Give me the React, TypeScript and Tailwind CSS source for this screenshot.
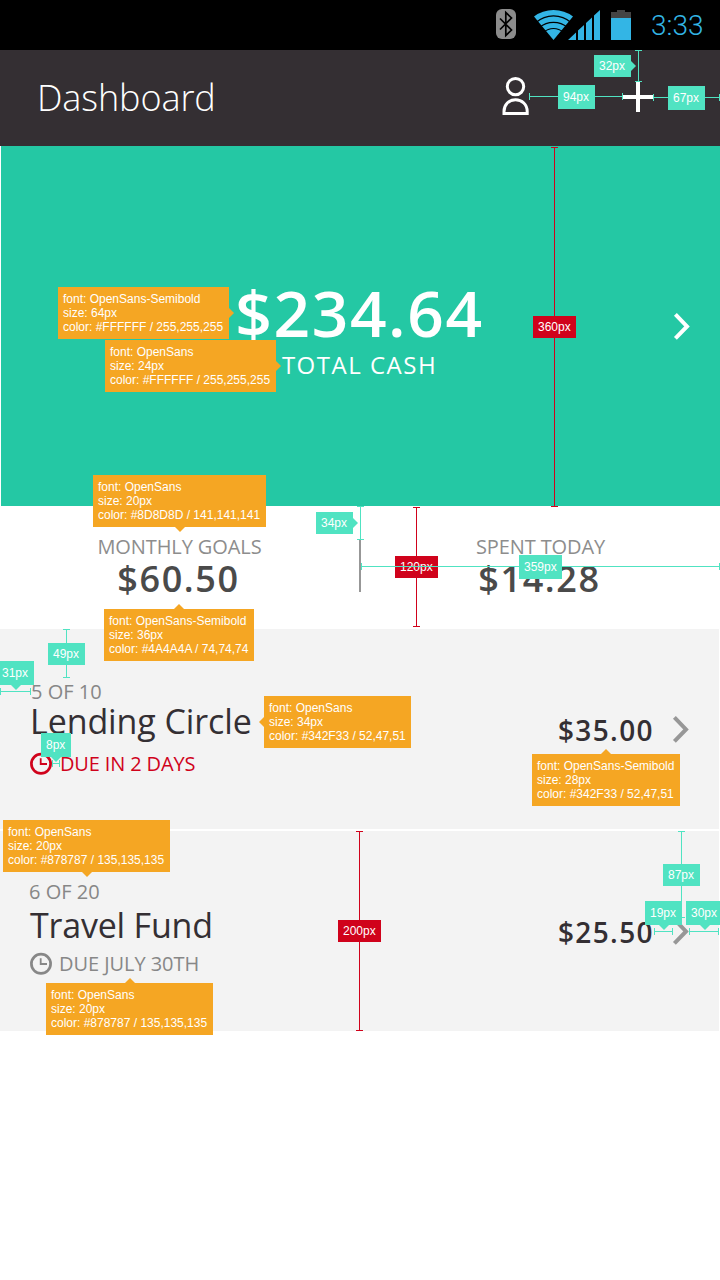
import React from "react";

type Tone = "mint" | "red";
type Side = "left" | "right" | "up" | "down";

const fills: Record<Tone, string> = {
  mint: "bg-[#50e3c2]",
  red: "bg-[#d0021b]",
};

function Arrow({ side, at, color }: { side: Side; at: number; color: string }) {
  const points = {
    left: "5,0 0,5 5,10",
    right: "0,0 5,5 0,10",
    up: "0,5 5,0 10,5",
    down: "0,0 5,5 10,0",
  }[side];
  const flat = side === "up" || side === "down";
  const place = {
    left: "right-full",
    right: "left-full",
    up: "bottom-full",
    down: "top-full",
  }[side];
  return (
    <svg
      className={`absolute ${place}`}
      width={flat ? 10 : 5}
      height={flat ? 5 : 10}
      style={flat ? { left: at - 5 } : { top: at - 5 }}
    >
      <polygon points={points} fill={color} />
    </svg>
  );
}

function Line({ x, y, length, vertical, tone = "mint" }: { x: number; y: number; length: number; vertical?: boolean; tone?: Tone }) {
  return (
    <div
      className={`absolute flex items-center justify-between ${vertical ? "w-[7px] flex-col" : "h-[7px]"}`}
      style={vertical ? { left: x - 3, top: y, height: length } : { left: x, top: y - 3, width: length }}
    >
      <span className={`${fills[tone]} ${vertical ? "h-px w-[7px]" : "h-[7px] w-px"}`} />
      <span className={`grow ${fills[tone]} ${vertical ? "w-px" : "h-px"}`} />
      <span className={`${fills[tone]} ${vertical ? "h-px w-[7px]" : "h-[7px] w-px"}`} />
    </div>
  );
}

function Tag({ x, y, w = 37, h = 22, tone = "mint", side, at = 0, children }: { x: number; y: number; w?: number; h?: number; tone?: Tone; side?: Side; at?: number; children: string }) {
  return (
    <div
      className={`absolute flex items-center whitespace-nowrap pl-[5px] text-[12px] leading-[14px] text-white ${fills[tone]}`}
      style={{ left: x, top: y, width: w, height: h }}
    >
      {children}
      {side && <Arrow side={side} at={at} color="#50e3c2" />}
    </div>
  );
}

function FontNote({ x, y, w, side, at, lines }: { x: number; y: number; w: number; side: Side; at: number; lines: string[] }) {
  return (
    <div
      className="absolute whitespace-nowrap bg-[#f5a623] p-[5px] text-[12px] leading-[14px] text-white"
      style={{ left: x, top: y, width: w }}
    >
      {lines.map((line) => (
        <div key={line}>{line}</div>
      ))}
      <Arrow side={side} at={at} color="#f5a623" />
    </div>
  );
}

function Chevron({ className }: { className: string }) {
  return (
    <svg className={className} width="18" height="28" viewBox="0 0 18 28" fill="none" stroke="currentColor" strokeWidth="4">
      <path d="M2.4 2.4 L14 14.4 L2.4 26.4" />
    </svg>
  );
}

function Clock() {
  return (
    <svg width="24" height="24" viewBox="0 0 24 24" fill="none" stroke="currentColor">
      <circle cx="12" cy="11.8" r="9.6" strokeWidth="2.7" />
      <path d="M11.7 6.3 V12 H18" strokeWidth="1.8" />
    </svg>
  );
}

function StatusBar() {
  return (
    <div className="flex h-[50px] items-center bg-black pl-[496px]">
      <svg width="136" height="50" viewBox="496 0 136 50">
        <rect x="496" y="9" width="20" height="30" rx="6" fill="#8c8c8c" />
        <path d="M500 18.5 L511.5 30 L505.8 35.5 V12.5 L511.5 18 L500 29.5" fill="none" stroke="#000" strokeWidth="1.7" />
        <path d="M553.5 40 L534 16.5 Q542.5 10 553.5 10 T573 16.5 Z" fill="#33b5e5" />
        <g fill="none" stroke="#000" strokeWidth="1.2">
          <path d="M536 22.5 Q543.5 15.8 553.5 15.8 T571 22.5" />
          <path d="M539.5 27.5 Q545.5 22.3 553.5 22.3 T567.5 27.5" />
          <path d="M543.5 32.2 Q548 28.5 553.5 28.5 T563.5 32.2" />
        </g>
        <path d="M568 40 L576 32.5 V40 Z M578 40 V30.6 L584 25 V40 Z M586 40 V23.1 L592 17.5 V40 Z M594 40 V15.6 L600 10 V40 Z" fill="#33b5e5" />
        <path d="M611 12 H617 V10 H625 V12 H631 V18 H611 Z" fill="#444" />
        <rect x="611" y="18" width="20" height="22" fill="#33b5e5" />
      </svg>
      <span className="ml-[19px] pt-0.5 font-[Roboto] text-[28px] font-light leading-[48px] text-[#33b5e5]">3:33</span>
    </div>
  );
}

function Header() {
  return (
    <header className="flex h-24 items-center justify-between bg-[#342f33] pl-[37px] pr-[67px]">
      <h1 className="text-[36px] font-light leading-[48px] tracking-[-0.1px] text-white">Dashboard</h1>
      <div className="flex items-center pb-1">
        <svg className="mr-[93px]" width="28" height="40" viewBox="502 76 28 40" fill="none" stroke="#fff" strokeWidth="3">
          <circle cx="515.5" cy="86.6" r="8.2" />
          <path d="M504 113.4 V111.5 C504 104.5 509 99.8 515.5 99.8 S527.2 104.5 527.2 111.5 V113.4 Z" />
        </svg>
        <svg className="mt-0.5" width="30" height="30" viewBox="0 0 30 30" stroke="#fff" strokeWidth="4">
          <path d="M15 0 V30 M0 15 H30" />
        </svg>
      </div>
    </header>
  );
}

function Stat({ label, amount }: { label: string; amount: string }) {
  return (
    <div className="flex w-[359px] flex-col items-center pt-[29px]">
      <span className="text-[20px] leading-6 tracking-[-0.1px] text-[#8d8d8d]">{label}</span>
      <span className="mr-0.5 text-[36px] font-semibold leading-10 tracking-[1.6px] text-[#4a4a4a]">{amount}</span>
    </div>
  );
}

export default function App() {
  return (
    <div className="relative h-[1280px] w-[720px] overflow-hidden bg-white font-['Open_Sans',sans-serif]">
      <StatusBar />
      <Header />

      <section className="ml-px flex h-[360px] items-center bg-[#24c8a4]">
        <div className="flex h-full grow flex-col items-center pl-[45px] pt-[131px] text-white">
          <span className="text-[64px] font-semibold leading-[72px] tracking-[1.6px]">$234.64</span>
          <span className="text-[24px] leading-8 tracking-[1.5px]">TOTAL CASH</span>
        </div>
        <Chevron className="mr-[29px] text-white" />
      </section>

      <section className="flex h-[123px]">
        <Stat label="MONTHLY GOALS" amount="$60.50" />
        <div className="mt-[34px] h-[52px] w-0.5 bg-[#979797]" />
        <Stat label="SPENT TODAY" amount="$14.28" />
      </section>

      <main className="mr-px flex flex-col gap-0.5">
        <article className="flex h-[200px] items-center justify-between bg-[#f3f3f3] pr-[29px]">
          <div className="flex flex-col self-start pt-[51px]">
            <span className="pl-[31px] text-[20px] leading-6 text-[#878787]">5 OF 10</span>
            <span className="-mt-px pl-[30px] text-[34px] leading-9 tracking-[-0.1px] text-[#342f33]">Lending Circle</span>
            <div className="mt-[13px] flex items-center pl-[29px] text-[#d0021b]">
              <Clock />
              <span className="ml-[7px] text-[20px] leading-6 tracking-[-0.15px]">DUE IN 2 DAYS</span>
            </div>
          </div>
          <div className="flex items-center gap-[18px]">
            <span className="pt-px text-[28px] font-semibold leading-9 tracking-[1.4px] text-[#342f33]">$35.00</span>
            <Chevron className="text-[#979797]" />
          </div>
        </article>
        <article className="flex h-[200px] items-center justify-between bg-[#f3f3f3] pr-[29px]">
          <div className="flex flex-col self-start pt-[49px]">
            <span className="pl-[29px] text-[20px] leading-6 text-[#878787]">6 OF 20</span>
            <span className="mt-[3px] pl-[30px] text-[34px] leading-9 tracking-[-0.2px] text-[#342f33]">Travel Fund</span>
            <div className="mt-[9px] flex items-center pl-[29px] text-[#878787]">
              <Clock />
              <span className="ml-1.5 text-[20px] leading-6 tracking-[-0.05px]">DUE JULY 30TH</span>
            </div>
          </div>
          <div className="flex items-center gap-[18px]">
            <span className="pt-px text-[28px] font-semibold leading-9 tracking-[1.4px] text-[#342f33]">$25.50</span>
            <Chevron className="text-[#979797]" />
          </div>
        </article>
      </main>

      <div className="absolute inset-0 font-['Liberation_Sans',sans-serif]">
        <Line x={638} y={50} length={32} vertical />
        <Tag x={594} y={55} side="right" at={11}>32px</Tag>
        <Line x={529} y={96} length={94} />
        <Tag x={558} y={85} h={24}>94px</Tag>
        <Line x={653} y={97} length={67} />
        <Tag x={668} y={86} h={24}>67px</Tag>

        <Line x={554} y={147} length={360} vertical tone="red" />
        <Tag x={533} y={316} w={43} tone="red">360px</Tag>
        <Line x={416} y={507} length={120} vertical tone="red" />
        <Tag x={395} y={556} w={43} tone="red">120px</Tag>
        <Line x={360} y={506} length={34} vertical />
        <Tag x={316} y={512} side="right" at={11}>34px</Tag>
        <Line x={361} y={566} length={359} />
        <Tag x={519} y={555} w={43} h={24}>359px</Tag>

        <Line x={66} y={629} length={49} vertical />
        <Tag x={48} y={643}>49px</Tag>
        <Line x={0} y={691} length={31} />
        <Tag x={-3} y={661} h={24} side="down" at={19}>31px</Tag>
        <Line x={52} y={763} length={8} />
        <Tag x={41} y={733} w={30} h={24} side="down" at={15}>8px</Tag>

        <Line x={359} y={831} length={200} vertical tone="red" />
        <Tag x={338} y={920} w={43} tone="red">200px</Tag>
        <Line x={681} y={831} length={87} vertical />
        <Tag x={663} y={864}>87px</Tag>
        <Line x={654} y={931} length={19} />
        <Tag x={645} y={901} h={24} side="down" at={19}>19px</Tag>
        <Line x={689} y={931} length={30} />
        <Tag x={686} y={901} h={24} side="down" at={19}>30px</Tag>

        <FontNote x={58} y={287} w={171} side="right" at={26} lines={["font: OpenSans-Semibold", "size: 64px", "color: #FFFFFF / 255,255,255"]} />
        <FontNote x={105} y={340} w={171} side="right" at={26} lines={["font: OpenSans", "size: 24px", "color: #FFFFFF / 255,255,255"]} />
        <FontNote x={93} y={475} w={173} side="down" at={87} lines={["font: OpenSans", "size: 20px", "color: #8D8D8D / 141,141,141"]} />
        <FontNote x={104} y={609} w={150} side="up" at={75} lines={["font: OpenSans-Semibold", "size: 36px", "color: #4A4A4A / 74,74,74"]} />
        <FontNote x={264} y={696} w={147} side="left" at={26} lines={["font: OpenSans", "size: 34px", "color: #342F33 / 52,47,51"]} />
        <FontNote x={532} y={754} w={148} side="up" at={74} lines={["font: OpenSans-Semibold", "size: 28px", "color: #342F33 / 52,47,51"]} />
        <FontNote x={3} y={820} w={167} side="down" at={84} lines={["font: OpenSans", "size: 20px", "color: #878787 / 135,135,135"]} />
        <FontNote x={46} y={983} w={167} side="up" at={84} lines={["font: OpenSans", "size: 20px", "color: #878787 / 135,135,135"]} />
      </div>
    </div>
  );
}
